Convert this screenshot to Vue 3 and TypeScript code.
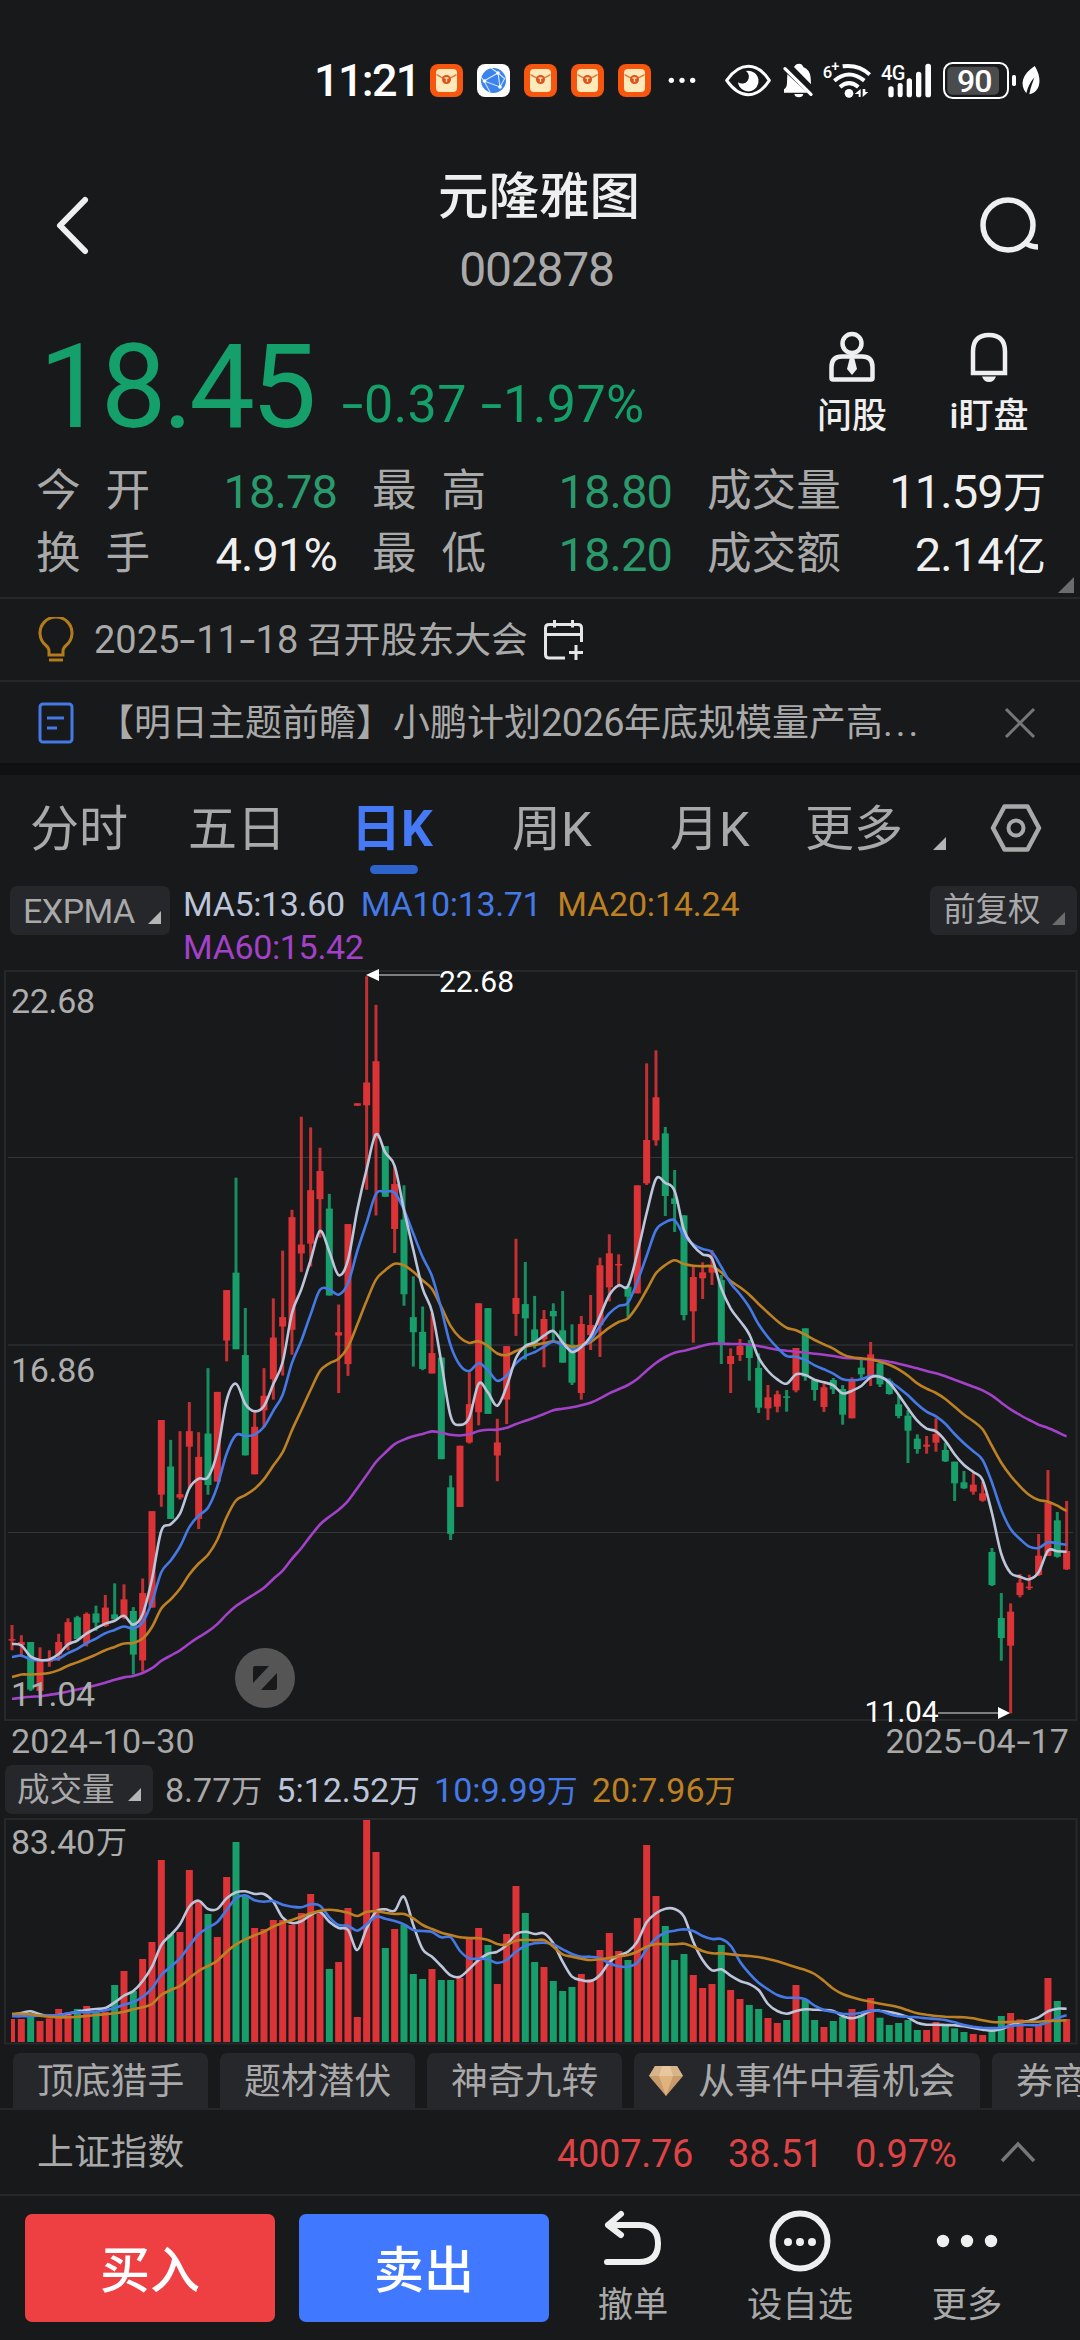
<script setup lang="ts">
type Row = [number, number, number, number, number]
interface Series { color: string; d: string }

const STEP = 9.333
const xAt = (i: number): number => 12 + STEP * i

/* Each block: [base y, units per pixel, rows of (rising, high, body top, body bottom, low)] */
const candleBlocks: [number, number, Row[]][] = [
  [960, 2.063, [
    [1, 1372, 1401, 1404, 1424], [1, 1393, 1407, 1413, 1438], [0, 1407, 1407, 1505, 1508], [1, 1418, 1446, 1508, 1515],
    [1, 1424, 1444, 1448, 1458], [1, 1390, 1407, 1433, 1446], [1, 1358, 1366, 1413, 1424], [0, 1353, 1356, 1401, 1403],
    [1, 1346, 1349, 1410, 1416], [0, 1332, 1348, 1367, 1384], [1, 1310, 1336, 1374, 1376], [0, 1286, 1350, 1360, 1360],
    [1, 1288, 1319, 1357, 1360], [0, 1335, 1343, 1433, 1474], [1, 1276, 1306, 1445, 1468], [1, 1137, 1137, 1336, 1336],
    [1, 949, 949, 1103, 1128], [0, 990, 1045, 1153, 1153], [1, 972, 1102, 1109, 1113], [1, 912, 972, 1004, 1090],
    [1, 974, 1025, 1153, 1174], [0, 842, 977, 1083, 1103], [1, 891, 891, 1076, 1076], [1, 681, 681, 785, 828],
    [0, 449, 645, 803, 803], [0, 718, 815, 1022, 1022], [1, 928, 963, 1061, 1061], [1, 842, 899, 929, 964],
    [1, 698, 779, 865, 907],
  ]],
  [960, 2.45, [
    [1, 712, 875, 898, 1018], [1, 612, 630, 906, 967], [1, 384, 697, 719, 764], [1, 410, 564, 695, 751],
    [1, 460, 517, 586, 680], [0, 573, 609, 822, 822], [1, 844, 912, 920, 1061], [1, 647, 647, 990, 1019],
    [1, 351, 351, 357, 357], [1, 40, 300, 356, 563], [1, 110, 248, 437, 626], [0, 456, 456, 580, 580],
    [1, 505, 549, 659, 718], [0, 552, 636, 819, 847], [0, 775, 875, 912, 996], [0, 849, 911, 1002, 1005],
    [1, 865, 963, 1013, 1013], [0, 974, 974, 1223, 1223], [0, 1263, 1292, 1406, 1421], [1, 1190, 1190, 1340, 1340],
    [1, 1010, 1088, 1182, 1185], [1, 841, 841, 1108, 1140], [0, 853, 853, 1112, 1112], [1, 1124, 1182, 1214, 1277],
    [1, 946, 946, 1077, 1137], [1, 683, 828, 867, 921], [0, 740, 843, 878, 979], [0, 823, 905, 940, 952],
  ]],
  [1000, 3, [
    [1, 930, 957, 1018, 1102], [0, 910, 933, 949, 1022], [0, 873, 991, 1088, 1088], [0, 973, 1034, 1148, 1155],
    [1, 948, 972, 1179, 1199], [1, 885, 975, 1005, 1050], [1, 773, 796, 976, 1071], [1, 703, 760, 862, 904],
    [1, 763, 792, 795, 862], [0, 860, 860, 890, 951], [1, 556, 556, 880, 880], [1, 190, 420, 550, 555],
    [1, 151, 292, 421, 437], [0, 381, 400, 588, 648], [0, 510, 595, 612, 696], [0, 646, 646, 945, 961],
    [1, 795, 831, 934, 1028], [1, 787, 817, 835, 897], [1, 750, 795, 818, 855], [0, 825, 840, 1033, 1092],
    [1, 1045, 1068, 1092, 1179], [1, 1017, 1038, 1065, 1083], [0, 1020, 1033, 1074, 1142], [0, 1060, 1104, 1223, 1239],
    [1, 1155, 1192, 1225, 1260], [1, 1172, 1183, 1220, 1237], [0, 1170, 1189, 1193, 1235], [1, 1044, 1044, 1171, 1177],
  ]],
  [1280, 3, [
    [0, 145, 145, 290, 302], [0, 298, 300, 330, 362], [1, 310, 322, 381, 396], [0, 294, 300, 328, 342],
    [0, 315, 327, 404, 434], [1, 292, 300, 415, 415], [0, 240, 263, 283, 300], [1, 186, 223, 288, 318],
    [0, 240, 250, 313, 321], [0, 295, 302, 342, 344], [0, 345, 373, 408, 415], [0, 390, 407, 452, 549],
    [0, 463, 476, 507, 521], [1, 468, 494, 500, 521], [1, 415, 462, 488, 515], [0, 488, 510, 544, 546],
    [0, 545, 545, 610, 663], [0, 573, 607, 625, 627], [1, 580, 614, 635, 644], [1, 605, 640, 662, 665],
    [0, 804, 816, 915, 918], [0, 939, 1014, 1074, 1142], [1, 970, 995, 1097, 1300], [1, 882, 908, 945, 952],
    [1, 884, 920, 924, 930], [1, 762, 827, 885, 888], [1, 570, 668, 828, 828], [0, 696, 721, 830, 833],
    [1, 663, 813, 868, 870],
  ]],
]

const candles = candleBlocks
  .flatMap(([base, unit, rows]) => rows.map(([up, ...v]) => ({ up: up === 1, v: v.map((n) => base + n / unit) })))
  .map((c, i) => ({ up: c.up, x: xAt(i), hi: c.v[0], top: c.v[1], h: Math.max(1.5, c.v[2] - c.v[1]), lo: c.v[3] }))

function curve(ys: number[]): string {
  const p = ys.map((y, i) => [xAt(i), y])
  let d = `M${p[0][0]} ${p[0][1].toFixed(1)}`
  for (let i = 0; i < p.length - 1; i++) {
    const a = p[Math.max(0, i - 1)], b = p[i], c = p[i + 1], e = p[Math.min(p.length - 1, i + 2)]
    d += `C${(b[0] + STEP / 3).toFixed(1)} ${(b[1] + (c[1] - a[1]) / 6).toFixed(1)} ${(c[0] - STEP / 3).toFixed(1)} ${(c[1] - (e[1] - b[1]) / 6).toFixed(1)} ${c[0].toFixed(1)} ${c[1].toFixed(1)}`
  }
  return d
}
const join = (...parts: [number, number, number[]][]): string =>
  curve(parts.flatMap(([base, unit, v]) => v.map((n) => base + n / unit)))

const averages: Series[] = [
  { color: '#a341c8', d: join(
    [960, 2.063, [1524, 1522, 1520, 1519, 1516, 1513, 1509, 1505, 1501, 1496, 1491, 1485, 1480, 1477, 1471, 1461, 1446, 1435, 1424, 1410, 1397, 1385, 1370, 1350, 1333, 1320, 1308, 1295, 1277]],
    [960, 2.45, [1496, 1467, 1441, 1411, 1383, 1364, 1347, 1325, 1294, 1262, 1230, 1207, 1186, 1175, 1167, 1161, 1155, 1158, 1163, 1165, 1162, 1154, 1151, 1151, 1146, 1137, 1129, 1121]],
    [1000, 3, [1242, 1231, 1226, 1222, 1216, 1208, 1195, 1180, 1168, 1155, 1137, 1112, 1089, 1071, 1058, 1052, 1045, 1037, 1031, 1031, 1032, 1032, 1034, 1038, 1044, 1049, 1052, 1055]],
    [1280, 3, [218, 221, 224, 228, 233, 235, 237, 239, 241, 245, 251, 258, 265, 273, 280, 289, 299, 310, 320, 331, 347, 368, 388, 405, 420, 434, 444, 456, 469]]) },
  { color: '#bd8022', d: join(
    [960, 2.063, [1479, 1474, 1474, 1473, 1471, 1465, 1456, 1449, 1441, 1433, 1424, 1417, 1410, 1409, 1400, 1376, 1338, 1319, 1297, 1268, 1245, 1227, 1196, 1149, 1115, 1104, 1091, 1071, 1043]],
    [960, 2.45, [1206, 1152, 1103, 1053, 1007, 988, 977, 948, 893, 835, 783, 760, 744, 748, 764, 785, 806, 850, 897, 925, 938, 934, 946, 964, 968, 958, 948, 943]],
    [1000, 3, [1030, 1024, 1031, 1040, 1035, 1026, 1005, 983, 966, 955, 918, 870, 820, 795, 781, 792, 797, 799, 799, 817, 843, 862, 884, 912, 938, 963, 983, 991]],
    [1280, 3, [164, 180, 193, 206, 223, 232, 235, 238, 245, 254, 268, 287, 310, 326, 339, 357, 380, 404, 424, 448, 498, 548, 587, 619, 645, 660, 665, 677, 692]]) },
  { color: '#4579e6', d: join(
    [960, 2.063, [1438, 1435, 1443, 1445, 1444, 1441, 1430, 1421, 1409, 1400, 1389, 1382, 1375, 1379, 1366, 1324, 1263, 1239, 1210, 1170, 1146, 1130, 1086, 1018, 980, 982, 979, 963, 930]],
    [960, 2.45, [1065, 987, 933, 868, 808, 807, 820, 792, 713, 643, 573, 568, 570, 612, 670, 728, 775, 855, 945, 993, 1007, 988, 1005, 1031, 1018, 988, 970, 961]],
    [1000, 3, [1040, 1025, 1035, 1049, 1040, 1020, 978, 940, 918, 908, 845, 768, 690, 667, 661, 707, 733, 747, 757, 801, 850, 883, 922, 973, 1012, 1043, 1068, 1070]],
    [1280, 3, [240, 256, 268, 281, 298, 301, 298, 288, 290, 303, 323, 346, 373, 395, 409, 431, 462, 490, 514, 540, 608, 690, 747, 777, 800, 804, 787, 790, 794]]) },
  { color: '#bcc5da', d: join(
    [960, 2.063, [1411, 1414, 1437, 1444, 1443, 1432, 1412, 1404, 1389, 1379, 1369, 1363, 1353, 1371, 1349, 1277, 1178, 1164, 1142, 1090, 1070, 1067, 1015, 908, 874, 916, 931, 920, 875]],
    [960, 2.45, [985, 865, 807, 735, 664, 714, 772, 735, 612, 512, 427, 472, 505, 612, 710, 805, 862, 985, 1118, 1139, 1121, 1038, 1060, 1092, 1045, 975, 946, 937]],
    [1000, 3, [1007, 993, 1027, 1056, 1041, 1009, 948, 885, 856, 858, 760, 640, 537, 549, 573, 690, 737, 763, 776, 865, 925, 963, 1003, 1073, 1113, 1138, 1151, 1123]],
    [1280, 3, [285, 299, 307, 316, 340, 332, 318, 292, 290, 308, 344, 385, 422, 446, 454, 482, 523, 555, 576, 600, 700, 822, 879, 890, 898, 877, 812, 814, 815]]) },
]

const volumeTops: number[] = [
  ...[1257, 1257, 1240, 1263, 1255, 1227, 1242, 1227, 1218, 1235, 1235, 1155, 1113, 1173, 1077, 1026, 780, 1003, 996, 810, 905, 942, 1011, 831, 726, 885, 984, 987, 960, 960, 975, 939, 882, 940, 1107, 1086, 924, 1251, 660, 756, 1044, 987, 974, 1122, 1137, 1107, 1140, 1140, 1134, 1017, 984, 1035, 1152, 1002, 858, 939, 1086].map((n) => 1600 + n / 3),
  ...[801, 843, 873, 861, 822, 837, 750, 699, 753, 780, 654, 435, 588, 678, 780, 762, 825, 864, 852, 735, 870, 897, 915, 927, 954, 969, 960, 855, 900, 960, 981, 963, 950, 927, 945, 894, 953, 975, 969, 960, 990, 990, 966, 978, 985, 996, 1002, 1005, 985, 948, 939, 958, 984, 975, 834, 903, 957].map((n) => 1700 + n / 3),
]

const volumeAverages: Series[] = [
  { color: '#bcc5da', d: join(
    [1600, 3, [1244, 1239, 1234, 1243, 1248, 1245, 1241, 1235, 1230, 1227, 1224, 1207, 1187, 1173, 1143, 1100, 1035, 1005, 973, 920, 902, 927, 927, 895, 877, 874, 882, 882, 905, 953, 969, 964, 945, 936, 965, 984, 990, 1050, 985, 935, 928, 932, 890, 975, 1048, 1070, 1098, 1126, 1130, 1107, 1080, 1061, 1055, 1035, 1003, 995, 1002]],
    [1700, 3, [700, 730, 785, 830, 840, 843, 825, 787, 767, 755, 725, 667, 640, 626, 627, 650, 725, 780, 811, 808, 827, 843, 852, 870, 912, 933, 941, 933, 928, 929, 930, 933, 948, 955, 947, 933, 932, 936, 942, 952, 968, 974, 974, 975, 976, 979, 984, 989, 992, 987, 976, 967, 962, 952, 934, 926, 926]]) },
  { color: '#4579e6', d: join(
    [1600, 3, [1249, 1249, 1248, 1247, 1246, 1245, 1240, 1237, 1237, 1235, 1231, 1224, 1214, 1206, 1190, 1165, 1125, 1100, 1075, 1038, 1003, 983, 966, 930, 895, 886, 901, 905, 903, 914, 920, 922, 913, 917, 952, 975, 977, 992, 973, 950, 956, 963, 973, 990, 993, 996, 1012, 1012, 1053, 1075, 1076, 1078, 1089, 1080, 1055, 1038, 1030]],
    [1700, 3, [728, 733, 748, 762, 770, 770, 775, 790, 799, 800, 788, 748, 715, 698, 692, 688, 693, 708, 717, 717, 737, 785, 820, 848, 868, 885, 893, 893, 898, 917, 930, 936, 941, 942, 938, 932, 933, 942, 949, 950, 952, 955, 957, 960, 967, 975, 980, 983, 984, 983, 978, 975, 975, 975, 967, 955, 946]]) },
  { color: '#bd8022', d: join(
    [1600, 3, [1241, 1241, 1243, 1247, 1250, 1252, 1252, 1250, 1248, 1245, 1243, 1240, 1235, 1228, 1222, 1212, 1185, 1170, 1158, 1135, 1113, 1098, 1082, 1055, 1033, 1018, 1006, 995, 980, 968, 960, 950, 940, 932, 929, 932, 938, 948, 935, 934, 938, 942, 942, 955, 975, 987, 998, 1005, 1012, 1014, 1015, 1020, 1032, 1034, 1022, 1019, 1021]],
    [1700, 3, [720, 740, 763, 770, 776, 780, 778, 774, 769, 765, 755, 740, 732, 733, 733, 731, 740, 753, 760, 760, 763, 766, 768, 771, 777, 784, 793, 802, 810, 822, 843, 866, 882, 892, 899, 905, 911, 916, 922, 931, 940, 944, 948, 950, 951, 952, 955, 961, 966, 967, 966, 965, 965, 965, 963, 962, 961]]) },
]

const quotes = [
  { label: '今开', value: '18.78', unit: '', down: true },
  { label: '最高', value: '18.80', unit: '', down: true },
  { label: '成交量', value: '11.59', unit: '万', down: false },
  { label: '换手', value: '4.91%', unit: '', down: false },
  { label: '最低', value: '18.20', unit: '', down: true },
  { label: '成交额', value: '2.14', unit: '亿', down: false },
]
const apps = ['mail', 'globe', 'mail', 'mail', 'mail']
</script>

<template>
  <main class="screen">
    <header class="status">
      <span class="clock">11:21</span>
      <template v-for="(app, i) in apps" :key="i">
        <svg v-if="app === 'mail'" class="app" viewBox="0 0 33 33">
          <rect width="33" height="33" rx="8" fill="#f7560f" />
          <rect x="6" y="5" width="21" height="23" rx="4" fill="#ffe9bb" />
          <path d="M6.500 10.500Q16.500 18 26.500 10.500" fill="none" stroke="#df7a3c" stroke-width="1.500" />
          <circle cx="16.500" cy="15.500" r="4.500" fill="#e0521c" />
          <path d="M14.500 14h4M16.500 14v4" stroke="#ffe3b0" stroke-width="1.300" />
        </svg>
        <svg v-else class="app" viewBox="0 0 33 33">
          <rect width="33" height="33" rx="8" fill="#fff" />
          <circle cx="16.500" cy="16.500" r="12.500" fill="#3b84ee" />
          <path d="M7 17L21 9L23 23ZM4 13L7 17L13 28M14 4L21 9L28 15M23 23L28 14" fill="none" stroke="#d6e7ff" stroke-width="1.100" />
          <circle cx="7.500" cy="17" r="1.800" fill="#fff" /><circle cx="21" cy="9" r="1.800" fill="#fff" /><circle cx="23" cy="23" r="1.800" fill="#fff" />
        </svg>
      </template>
      <svg class="sys" width="500" height="75" viewBox="0 0 1500 225">
        <g fill="#fff">
          <circle cx="334" cy="106" r="8" /><circle cx="366" cy="106" r="8" /><circle cx="398" cy="106" r="8" />
          <path d="M500 106Q530 64 565 64Q600 64 628 106Q600 149 565 149Q530 149 500 106Z" fill="none" stroke="#fff" stroke-width="9" stroke-linejoin="round" />
          <path d="M558 78A31 31 0 1 1 534 112A20 20 0 0 0 558 78Z" />
          <path d="M702 66Q707 56 717 56Q727 56 730 66Q750 74 752 98L753 118ZM682 88L742 143H672V133Q681 128 681 112ZM703 147H730Q728 157 716.500 157Q705 157 703 147Z" />
          <path d="M675 71L753 148" stroke="#fff" stroke-width="10" stroke-linecap="round" />
          <g fill="none" stroke="#fff" stroke-width="12">
            <path d="M848 64Q897 58 929 89" /><path d="M823 107Q867 70 913 107" /><path d="M840 126Q867 103 895 126" />
          </g>
          <circle cx="867" cy="145" r="13" />
          <path d="M884 147L902 132V156H896V147ZM908 132V156L925 141H916V132Z" />
          <rect x="985" y="124" width="16" height="33" rx="8" /><rect x="1013" y="114" width="15" height="43" rx="7" /><rect x="1040" y="100" width="16" height="57" rx="8" /><rect x="1068" y="80" width="16" height="77" rx="8" /><rect x="1096" y="56" width="17" height="101" rx="8" />
          <rect x="1162" y="65" width="155" height="84" rx="14" fill="#4a4b4d" />
          <rect x="1152" y="54" width="192" height="105" rx="26" fill="none" stroke="#fff" stroke-width="6" />
          <rect x="1356" y="90" width="12" height="33" rx="5" />
          <path d="M1424 63C1448 100 1442 142 1408 148C1411 128 1419 112 1423 97C1412 110 1403 126 1399 145C1378 118 1386 88 1424 63Z" />
        </g>
        <g class="sys-text">
          <text x="788" y="100" font-size="50">6</text><text x="814" y="78" font-size="44">+</text>
          <text x="963" y="104" font-size="60" textLength="73">4G</text>
          <text x="1191" y="140" font-size="96" textLength="106">90</text>
        </g>
      </svg>
    </header>

    <nav class="title-bar">
      <svg class="back" width="60" height="70" viewBox="0 0 60 70"><path d="M41 10L16 35.500L41 61" /></svg>
      <div class="titles"><h1>元隆雅图</h1><span>002878</span></div>
      <svg class="search" width="70" height="70" viewBox="0 0 70 70"><circle cx="34" cy="34" r="25" /><path d="M50 51Q56 56 64 56" /></svg>
    </nav>

    <section class="price-row">
      <strong>18.45</strong>
      <span class="change"><i class="dash">-</i>0.37 <i class="dash">-</i>1.97%</span>
      <div class="tool">
        <svg width="60" height="56" viewBox="0 0 60 56">
          <circle cx="30" cy="14.500" r="9.500" /><path d="M9.500 49V38Q9.500 27.500 20 27.500H40Q50.500 27.500 50.500 38V49Q50.500 50.500 49 50.500H11Q9.500 50.500 9.500 49Z" />
          <path class="solid" d="M28 28H32L35 40L30 46L25 40Z" />
        </svg>
        <span>问股</span>
      </div>
      <div class="tool watch">
        <svg width="60" height="56" viewBox="0 0 60 56"><path d="M14 44V22.500Q14 6 30 6T46 22.500V44Z" /><path class="solid" d="M23 47.500H37Q35 53 30 53T23 47.500Z" /></svg>
        <span>i盯盘</span>
      </div>
    </section>

    <section class="quotes">
      <div v-for="q in quotes" :key="q.label" class="quote">
        <span class="label" :class="{ wide: q.label.length === 2 }">{{ q.label }}</span>
        <span class="value" :class="{ down: q.down }">{{ q.value }}<small v-if="q.unit">{{ q.unit }}</small></span>
      </div>
      <svg class="corner" width="16" height="16" viewBox="0 0 16 16"><path d="M16 0V16H0Z" fill="#6c6c6d" /></svg>
    </section>

    <section class="notice">
      <svg class="lead" width="36" height="46" viewBox="0 0 36 46" fill="none" stroke="#b27c1c" stroke-width="3">
        <path d="M11 38V34Q11 31 8 28.500A16 16 0 1 1 28 28.500Q25 31 25 34V38Z" /><path d="M11 43H25" />
      </svg>
      <span class="date">2025<i class="dash">-</i>11<i class="dash">-</i>18</span><span class="event">召开股东大会</span>
      <svg class="calendar" width="44" height="44" viewBox="0 0 44 44" fill="none" stroke="#e6e6e6" stroke-width="3">
        <path d="M23 40H7Q3.500 40 3.500 36.500V10Q3.500 6.500 7 6.500H36Q39.500 6.500 39.500 10V24M3.500 16.500H39.500M12.500 2V9.500M30.500 2V9.500M34 27V42M27 34.500H41" />
      </svg>
    </section>
    <section class="notice news">
      <svg class="lead" width="36" height="46" viewBox="0 0 36 46" fill="none" stroke="#4579e6" stroke-width="3"><rect x="2" y="4" width="32" height="38" rx="3" /><path d="M9 18H26M9 28H19" /></svg>
      <span class="headline">【明日主题前瞻】小鹏计划<b>2026</b>年底规模量产高<em>...</em></span>
      <svg class="close" width="32" height="32" viewBox="0 0 32 32"><path d="M2 2L30 30M30 2L2 30" stroke="#777" stroke-width="3" /></svg>
    </section>

    <nav class="tabs">
      <span>分时</span><span>五日</span><span class="active">日K</span><span class="week">周K</span><span class="month">月K</span><span class="more">更多</span>
      <svg class="tri" width="13" height="13" viewBox="0 0 13 13"><path d="M13 0V13H0Z" fill="#b5b5b5" /></svg>
      <svg class="gear" width="52" height="50" viewBox="0 0 52 50" fill="none" stroke="#a9a9a9"><path d="M14.500 3.500H37.500L49 25L37.500 46.500H14.500L3 25Z" stroke-width="4.500" stroke-linejoin="round" /><circle cx="26" cy="25" r="7.500" stroke-width="4" /></svg>
    </nav>

    <section class="ma-row">
      <div class="pill expma">EXPMA<svg width="13" height="13" viewBox="0 0 13 13"><path d="M13 0V13H0Z" fill="#b5b5b5" /></svg></div>
      <p class="ma"><span class="c5">MA5:13.60</span><span class="c10">MA10:13.71</span><span class="c20">MA20:14.24</span><br><span class="c60">MA60:15.42</span></p>
      <div class="pill adjust"><span>前复权</span><svg width="13" height="13" viewBox="0 0 13 13"><path d="M13 0V13H0Z" fill="#6c6c6d" /></svg></div>
    </section>

    <svg class="chart" width="1080" height="756" viewBox="0 966 1080 756">
      <g fill="none" stroke="#26282b" stroke-width="2">
        <rect x="5" y="971" width="1071.500" height="749" />
        <path d="M8 1345H1073" />
        <path d="M8 1157.500H1073M8 1532.500H1073" stroke="#333537" stroke-width="1" />
      </g>
      <g v-for="(c, i) in candles" :key="i" :fill="c.up ? '#dc3337' : '#179e6a'">
        <rect :x="c.x - 1.500" :y="c.hi" width="3" :height="c.lo - c.hi" opacity="0.880" />
        <rect :x="c.x - 3.500" :y="c.top" width="7" :height="c.h" />
      </g>
      <path v-for="s in averages" :key="s.color" :d="s.d" :stroke="s.color" class="avg" />
      <g class="axis">
        <text x="11" y="1012.500" textLength="84">22.68</text>
        <text x="11" y="1382" textLength="84">16.86</text>
        <text x="11" y="1706" textLength="84">11.04</text>
      </g>
      <path d="M378 975H440M938 1713H998" stroke="#a0a0a0" stroke-width="1.500" />
      <path d="M366 975L379 969V981ZM1010 1713L998 1707V1719Z" fill="#fff" />
      <text class="peak" x="439" y="991.500" textLength="75">22.68</text>
      <text class="peak" x="864.500" y="1721.500" textLength="74">11.04</text>
      <circle cx="265" cy="1678" r="30" fill="#555" />
      <path d="M255 1666H269L253 1683V1668Q253 1666 255 1666ZM275 1690H261L277 1673V1688Q277 1690 275 1690Z" fill="#17191b" />
    </svg>

    <div class="dates"><span>2024<i class="dash">-</i>10<i class="dash">-</i>30</span><span>2025<i class="dash">-</i>04<i class="dash">-</i>17</span></div>

    <section class="volume-row">
      <div class="pill"><b>成交量</b><svg width="13" height="13" viewBox="0 0 13 13"><path d="M13 0V13H0Z" fill="#b5b5b5" /></svg></div>
      <span class="v0">8.77<small>万</small></span><span class="c5">5:12.52<small>万</small></span><span class="c10">10:9.99<small>万</small></span><span class="c20">20:7.96<small>万</small></span>
    </section>

    <svg class="chart" width="1080" height="228" viewBox="0 1818 1080 228">
      <rect x="5" y="1819" width="1071.500" height="224.500" fill="none" stroke="#26282b" stroke-width="2" />
      <rect v-for="(y, i) in volumeTops" :key="i" :x="xAt(i) - (i ? 3.500 : 1)" :y="y" :width="i ? 7 : 4" :height="2042 - y" :fill="candles[i].up ? '#dc3337' : '#179e6a'" />
      <path v-for="s in volumeAverages" :key="s.color" :d="s.d" :stroke="s.color" class="avg" />
      <g class="axis"><text x="11" y="1854" textLength="84">83.40</text><text x="96" y="1853" font-size="30">万</text></g>
    </svg>

    <section class="chips">
      <span>顶底猎手</span><span>题材潜伏</span><span>神奇九转</span>
      <span class="gem">
        <svg width="34" height="32" viewBox="0 0 34 32"><path d="M6 1H28L34 11L17 31L0 11Z" fill="#c99a6a" /><path d="M6 1H28L34 11H0Z" fill="#d8b48a" /><path d="M10 11H24L17 31Z" fill="#e0b27e" /><path d="M10 11L13 1H21L24 11Z" fill="#e6c7a0" /></svg>从事件中看机会</span>
      <span>券商金股</span>
    </section>

    <section class="index">
      <span class="name">上证指数</span>
      <span class="n1">4007.76</span><span class="n2">38.51</span><span class="n3">0.97%</span>
      <svg width="36" height="24" viewBox="0 0 36 24"><path d="M2 21L18 4L34 21" fill="none" stroke="#777" stroke-width="3.500" /></svg>
    </section>

    <footer class="actions">
      <button class="buy">买入</button>
      <button class="sell">卖出</button>
      <div class="act undo">
        <svg width="64" height="64" viewBox="0 0 64 64"><path d="M6 53H38Q57 53 57 34.500T38 16H7M20 5L7 16L20 26" /></svg><span>撤单</span>
      </div>
      <div class="act fav">
        <svg width="64" height="64" viewBox="0 0 64 64"><circle cx="32" cy="32" r="27.500" /><g class="solid"><circle cx="20" cy="33" r="4" /><circle cx="32" cy="33" r="4" /><circle cx="44" cy="33" r="4" /></g></svg><span>设自选</span>
      </div>
      <div class="act rest">
        <svg width="64" height="64" viewBox="0 0 64 64"><g class="solid"><circle cx="8" cy="32" r="6.200" /><circle cx="32" cy="32" r="6.200" /><circle cx="56" cy="32" r="6.200" /></g></svg><span>更多</span>
      </div>
    </footer>
  </main>
</template>

<style>
body { background: #17191b; overflow: hidden; }
</style>

<style scoped>
.screen { width: 1080px; height: 2340px; overflow: hidden; background: #17191b; color: #a9a9a9; font-family: Roboto, "Noto Sans CJK SC", sans-serif; line-height: 1; white-space: nowrap; }
.screen * { box-sizing: border-box; }
svg { display: block; flex: none; }
.dash { display: inline-block; width: 0.44em; text-align: center; font-style: normal; transform: scaleX(1.5); letter-spacing: 0; }

.status { height: 161px; display: flex; align-items: center; padding-left: 314px; }
.clock { width: 116px; font-size: 45px; font-weight: 500; color: #fff; letter-spacing: -1.7px; }
.app { width: 33px; height: 33px; margin-right: 14px; }
.sys { margin: 4px 0 0 -105px; }
.sys-text { fill: #fff; font-family: Roboto, sans-serif; font-weight: 500; }

.title-bar { height: 145px; display: flex; justify-content: space-between; padding: 0 36px 0 44px; }
.titles { display: flex; flex-direction: column; align-items: center; }
.titles h1 { margin: 0; font-size: 50.5px; line-height: 72px; font-weight: 500; color: #efefef; }
.titles span { font-size: 48px; line-height: 73px; letter-spacing: -1.2px; margin-right: 5px; }
.back { margin-top: 29px; fill: none; stroke: #efefef; stroke-width: 6; stroke-linecap: round; stroke-linejoin: round; }
.search { margin-top: 30px; fill: none; stroke: #efefef; stroke-width: 5.5; }

.price-row { height: 154px; display: flex; padding-left: 39px; color: #149f6b; }
.price-row strong { width: 302px; font-size: 117px; font-weight: 400; line-height: 162px; letter-spacing: -4px; }
.change { width: 471px; padding-top: 18px; font-size: 52px; line-height: 162px; letter-spacing: 0.4px; }
.tool { width: 80px; padding-top: 23px; display: flex; flex-direction: column; align-items: center; gap: 14px; color: #efefef; font-size: 35px; font-weight: 500; }
.tool svg { fill: none; stroke: #efefef; stroke-width: 4.5; }
.tool .solid { fill: #efefef; stroke: none; }
.watch { margin-left: 57px; }

.quotes { position: relative; height: 139px; padding: 0 35px 1px 36px; display: grid; grid-template-columns: 301px 300px 1fr; grid-auto-rows: 63px; column-gap: 35px; border-bottom: 2px solid #25272a; }
.quote { display: flex; justify-content: space-between; align-items: center; font-size: 44.6px; }
.label.wide { letter-spacing: 25px; }
.value { font-size: 47px; color: #efefef; letter-spacing: -0.9px; }
.value small { font-size: 43px; }
.value.down { color: #2a9a6c; }
.corner { position: absolute; right: 6px; bottom: 4px; }

.notice { height: 83px; display: flex; align-items: center; padding-left: 38px; font-size: 36.8px; border-bottom: 2px solid #25272a; }
.date { margin-left: 20px; width: 213px; font-size: 38px; letter-spacing: 0; }
.event { padding-top: 3px; }
.calendar { margin-left: 14px; }
.news { height: 81px; border: 0; }
.headline { margin-left: 23px; width: 907px; font-size: 37px; padding-top: 1px; }
.headline b { font-weight: 400; font-size: 38px; letter-spacing: -0.6px; }
.headline em { font-style: normal; letter-spacing: 3px; }
.tabs { height: 114px; display: flex; align-items: center; border-top: 12px solid #101113; padding: 6px 0 0 30px; font-size: 49px; }
.tabs span { width: 158px; }
.tabs span:nth-child(2) { width: 163px; }
.tabs .active { position: relative; color: #4579f5; font-weight: 700; width: 161px; font-size: 50px; }
.tabs .active::after { content: ""; position: absolute; left: 19px; top: 61px; width: 48px; height: 9px; border-radius: 5px; background: #2f63cc; }
.tabs .week { width: 158px; }
.tabs .month { width: 161px; }
.tabs .more { width: 128px; margin-left: -26px; }
.tri { margin-top: 28px; }
.gear { margin: -3px 0 0 44px; }

.ma-row { height: 89px; display: flex; padding: 9px 0 0 10px; }
.pill { height: 49px; display: flex; align-items: center; background: #25272b; border-radius: 7px; font-size: 32.5px; }
.pill b { font-weight: 400; padding-top: 2px; }
.pill svg { margin-top: 10px; }
.expma { width: 160px; padding-left: 13px; font-size: 34px; letter-spacing: -0.5px; gap: 13px; }
.expma svg { margin-top: 14px; }
.ma { margin: -3px 0 0 13px; width: 747px; font-size: 34px; line-height: 43px; letter-spacing: -0.35px; }
.ma span { margin-right: 16px; }
.ma .c20 { letter-spacing: -0.2px; }
.c5 { color: #bcc5da; } .c10 { color: #4579e6; } .c20 { color: #bd8022; } .c60 { color: #a341c8; }
.adjust { width: 147px; padding-left: 13px; gap: 11px; }
.adjust svg { margin-top: 15px; }

.avg { fill: none; stroke-width: 2.6; stroke-linejoin: round; }
.axis text { fill: #adadad; font-size: 34px; }
.axis text[font-size] { font-size: 31px; }
.peak { fill: #fff; font-size: 30px; }
.dates { height: 38px; display: flex; justify-content: space-between; align-items: center; padding: 0 11px; font-size: 34px; letter-spacing: 0.1px; }

.volume-row { height: 58px; display: flex; align-items: center; padding-left: 5px; font-size: 34px; }
.volume-row .pill { width: 148px; padding-left: 12px; gap: 13px; margin-right: 12px; }
.volume-row span { margin-right: 14px; padding-top: 1px; }
.volume-row small { font-size: 31px; }

.chips { height: 64px; display: flex; gap: 12px; padding: 7px 0 0 13px; border-bottom: 2px solid #25272a; overflow: hidden; }
.chips span { flex: none; height: 55px; width: 195px; padding: 4px 0 0 24px; display: flex; align-items: center; background: #25272b; border-radius: 7px 7px 0 0; font-size: 36.8px; }
.chips .gem { width: 346px; padding-left: 15px; gap: 15px; }
.gem svg { margin-top: -3px; }

.index { height: 86px; display: flex; align-items: center; padding: 3px 0 0 37px; border-bottom: 2px solid #25272a; font-size: 38px; color: #df4345; }
.index svg { margin-top: -4px; }
.name { width: 520px; font-size: 36.8px; color: #a9a9a9; }
.n1 { width: 171px; letter-spacing: -0.3px; } .n2 { width: 127px; } .n3 { width: 145px; }

.actions { height: 144px; display: flex; padding: 18px 0 0 25px; }
.actions button { width: 250px; height: 108px; margin: 0 24px 0 0; padding: 0 0 5px; border: 0; border-radius: 7px; color: #fff; font-family: inherit; font-size: 50px; font-weight: 500; }
.buy { background: #ee3f43; }
.sell { background: #4079ff; }
.act { display: flex; flex-direction: column; align-items: center; gap: 15px; margin-top: -5px; width: 120px; font-size: 35.3px; }
.act svg { fill: none; stroke: #efefef; stroke-width: 6; stroke-linecap: round; stroke-linejoin: round; }
.act .solid { fill: #efefef; stroke: none; }
.undo { margin-left: 0; }
.fav { margin-left: 47px; }
.rest { margin-left: 47px; }
</style>
